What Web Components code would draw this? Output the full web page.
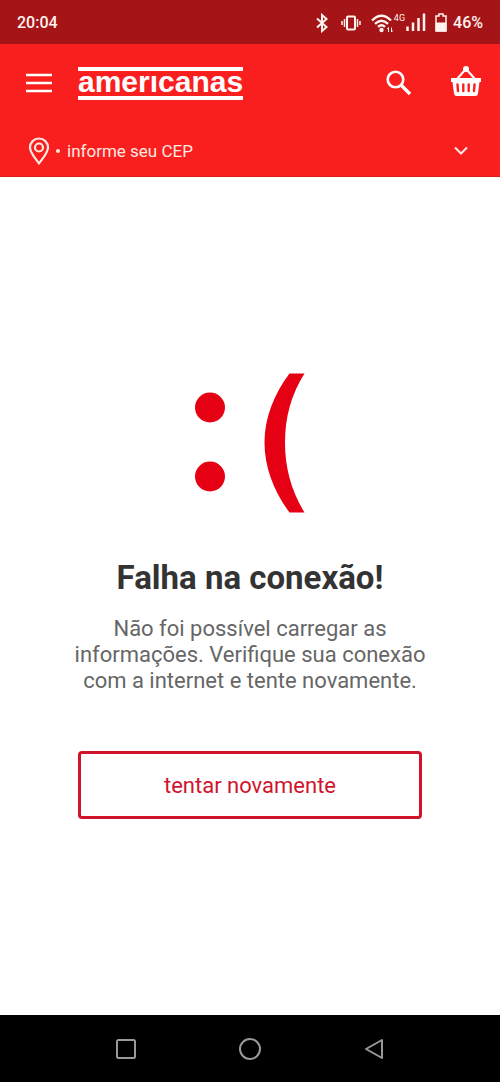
<!DOCTYPE html>
<html lang="pt-BR">
<head>
<meta charset="utf-8">
<meta name="viewport" content="width=device-width, initial-scale=1">
<title>americanas</title>
<style>
  body { margin: 0; font-family: Roboto, "Liberation Sans", sans-serif; }
</style>
</head>
<body>
<connection-screen></connection-screen>
<script>
const define = (name, html) => customElements.define(name, class extends HTMLElement {
  constructor() {
    super();
    const template = document.createElement('template');
    template.innerHTML = html;
    this.attachShadow({ mode: 'open' }).append(template.content.cloneNode(true));
  }
});

define('status-bar', `
<style>
  :host { display: flex; align-items: center; justify-content: space-between; box-sizing: border-box; height: 44px; padding: 2px 17px 0; background: #a51416; color: #fff3ee; font-size: 16px; font-weight: 500; line-height: 20px; }
  .icons { display: flex; align-items: center; }
  svg { display: block; fill: none; stroke: currentColor; }
  .bt { margin-right: 12px; }
  .vib { margin-right: 10px; }
  .net { align-self: flex-start; font-size: 9px; line-height: 10px; font-weight: 400; margin-right: 1px; }
  .sig { margin-right: 9px; }
  .bat { margin-right: 6px; }
</style>
<time>20:04</time>
<div class="icons">
  <svg class="bt" width="14" height="20" viewBox="0 0 14 20" stroke-width="2"><path d="M2 5.500 L11.500 14 L7 18 V2 L11.500 6 L2 14.500"/></svg>
  <svg class="vib" width="20" height="20" viewBox="0 0 20 20" stroke-width="2"><rect x="6" y="3.500" width="8" height="13" rx="1"/><path d="M3.500 6V14M16.500 6V14" stroke-width="1.500"/><path d="M1 8V12M19 8V12" stroke-width="1.500"/></svg>
  <svg class="wifi" width="23" height="20" viewBox="0 0 23 20" stroke-width="2.400"><path d="M1 7.500Q10.500 -2 20 7.500M4 10.800Q10.500 4.500 17 10.800M7 13.800Q10.500 10.500 14 13.800"/><circle cx="10.500" cy="17" r="2.200" fill="currentColor" stroke="none"/><path d="M17.500 19V14.500M16.300 16L17.500 14.500M20.500 14.500V19M21.700 17.500L20.500 19" stroke-width="1"/></svg>
  <span class="net">4G</span>
  <svg class="sig" width="20" height="20" viewBox="0 0 20 20" stroke-width="2.500"><path d="M1.500 18V13.500M7 18V9.500M12.500 18V5M18 18V.5"/></svg>
  <svg class="bat" width="12" height="20" viewBox="0 0 12 20"><path d="M4 1H8V3H11V18H1V3H4Z" stroke-width="1.500"/><path d="M1 10H11V18H1Z" fill="currentColor"/></svg>
  <span>46%</span>
</div>`);

define('brand-logo', `
<style>
  :host { display: block; }
  a { display: block; box-sizing: border-box; height: 33px; border: solid #fff; border-width: 4px 0; color: #fff; text-decoration: none; font: bold 30px/21px "Liberation Sans", sans-serif; }
</style>
<a href="#" aria-label="americanas">amer\u0131canas</a>`);

define('app-header', `
<style>
  :host { display: block; background: #f91f1f; color: #fff; border-bottom: 1px solid #dc1b1d; }
  .bar { display: flex; align-items: center; height: 78px; padding: 0 18px; }
  button { display: block; border: 0; padding: 0; background: none; color: inherit; font: inherit; cursor: pointer; }
  svg { display: block; fill: none; stroke: currentColor; }
  .menu { width: 40px; padding: 8px; margin-right: 20px; }
  .search { margin: 0 38px 0 auto; }
  .cep { display: flex; align-items: center; box-sizing: border-box; width: 100%; height: 54px; padding: 3px 31px 0 28px; font-size: 17px; line-height: 20px; color: #ffe9e0; }
  .dot { width: 4px; height: 4px; border-radius: 50%; background: currentColor; margin: 0 7px 0 6px; }
  .arrow { margin-left: auto; }
</style>
<div class="bar">
  <button class="menu" aria-label="Menu"><svg width="26" height="20" viewBox="0 0 26 20" stroke-width="2.500"><path d="M0 2H26M0 10H26M0 18H26"/></svg></button>
  <brand-logo></brand-logo>
  <button class="search" aria-label="Buscar"><svg width="26" height="26" viewBox="0 0 26 26"><circle cx="9.500" cy="9.500" r="7.800" stroke-width="2.600"/><path d="M15 15L24 24" stroke-width="3.400"/></svg></button>
  <button aria-label="Cesta"><svg width="32" height="34" viewBox="0 0 32 34"><path d="M7 13L15 4M25 13L17 4" stroke-width="2"/><circle cx="16" cy="3" r="3" fill="currentColor" stroke="none"/><path d="M1 12H31V16H29.500L28 27.500Q27.700 30 25.500 30H6.500Q4.300 30 4 27.500L2.500 16H1Z" fill="currentColor" stroke="none"/><path d="M7.500 18.500L8 25M13.300 18.500V25M18.700 18.500V25M24.500 18.500L24 25" stroke="#f91f1f" stroke-width="2.400" stroke-linecap="round"/></svg></button>
</div>
<button class="cep">
  <svg width="22" height="28" viewBox="0 0 22 28" stroke-width="2.200"><path d="M11 26.500C8 22 2 16 2 10.500A9 9 0 0 1 20 10.500C20 16 14 22 11 26.500Z" stroke-linejoin="round"/><circle cx="11" cy="10.500" r="4"/></svg>
  <span class="dot"></span>
  <span>informe seu CEP</span>
  <svg class="arrow" width="16" height="10" viewBox="0 0 16 10" stroke-width="2"><path d="M2 1.500L8 7.500L14 1.500"/></svg>
</button>`);

define('outline-button', `
<style>
  :host { display: block; }
  button { display: block; box-sizing: border-box; width: 100%; height: 68px; border: 3px solid #d0142c; border-radius: 4px; padding: 2px 0 0; background: #fff; color: #d0142c; font: inherit; font-size: 22px; line-height: 26px; cursor: pointer; }
</style>
<button><slot></slot></button>`);

define('error-message', `
<style>
  :host { display: flex; flex-direction: column; align-items: center; text-align: center; padding: 0 64px; }
  svg { display: block; fill: #e60014; }
  h1 { margin: 45px 0 18px; font-size: 33px; line-height: 40px; font-weight: 700; color: #333; }
  p { margin: 0; font-size: 22px; line-height: 26px; color: #666; }
  outline-button { align-self: stretch; margin: 57px 14px 0; }
</style>
<svg width="110" height="140" viewBox="0 0 110 140" role="img" aria-label="Rosto triste"><circle cx="15" cy="34.500" r="15"/><circle cx="15" cy="103.500" r="15"/><path d="M94.500 .5H109.500Q90 31 90 69.500T109.500 139.500H94.500C79 119 69.500 94 69.500 69.500S79 21 94.500 .5Z"/></svg>
<h1><slot name="title"></slot></h1>
<p><slot></slot></p>
<outline-button><slot name="action"></slot></outline-button>`);

define('system-nav', `
<style>
  :host { display: flex; justify-content: center; align-items: center; gap: 100px; height: 67px; background: #000; color: #999; }
  button { display: block; border: 0; padding: 0; background: none; color: inherit; }
  svg { display: block; fill: none; stroke: currentColor; stroke-width: 2; stroke-linejoin: round; }
</style>
<button aria-label="Recentes"><svg width="24" height="24" viewBox="0 0 24 24"><rect x="3" y="3" width="18" height="18" rx="1.500"/></svg></button>
<button aria-label="Início"><svg width="24" height="24" viewBox="0 0 24 24"><circle cx="12" cy="12" r="10"/></svg></button>
<button aria-label="Voltar"><svg width="24" height="24" viewBox="0 0 24 24"><path d="M20 3V21L4 12Z"/></svg></button>`);

define('connection-screen', `
<style>
  :host { display: flex; flex-direction: column; min-height: 100vh; background: #fff; }
  main { flex: 1; display: flex; flex-direction: column; justify-content: center; }
</style>
<status-bar></status-bar>
<app-header></app-header>
<main>
  <error-message>
    <span slot="title">Falha na conexão!</span>
    Não foi possível carregar as informações. Verifique sua conexão com a internet e tente novamente.
    <span slot="action">tentar novamente</span>
  </error-message>
</main>
<system-nav></system-nav>`);
</script>
</body>
</html>
